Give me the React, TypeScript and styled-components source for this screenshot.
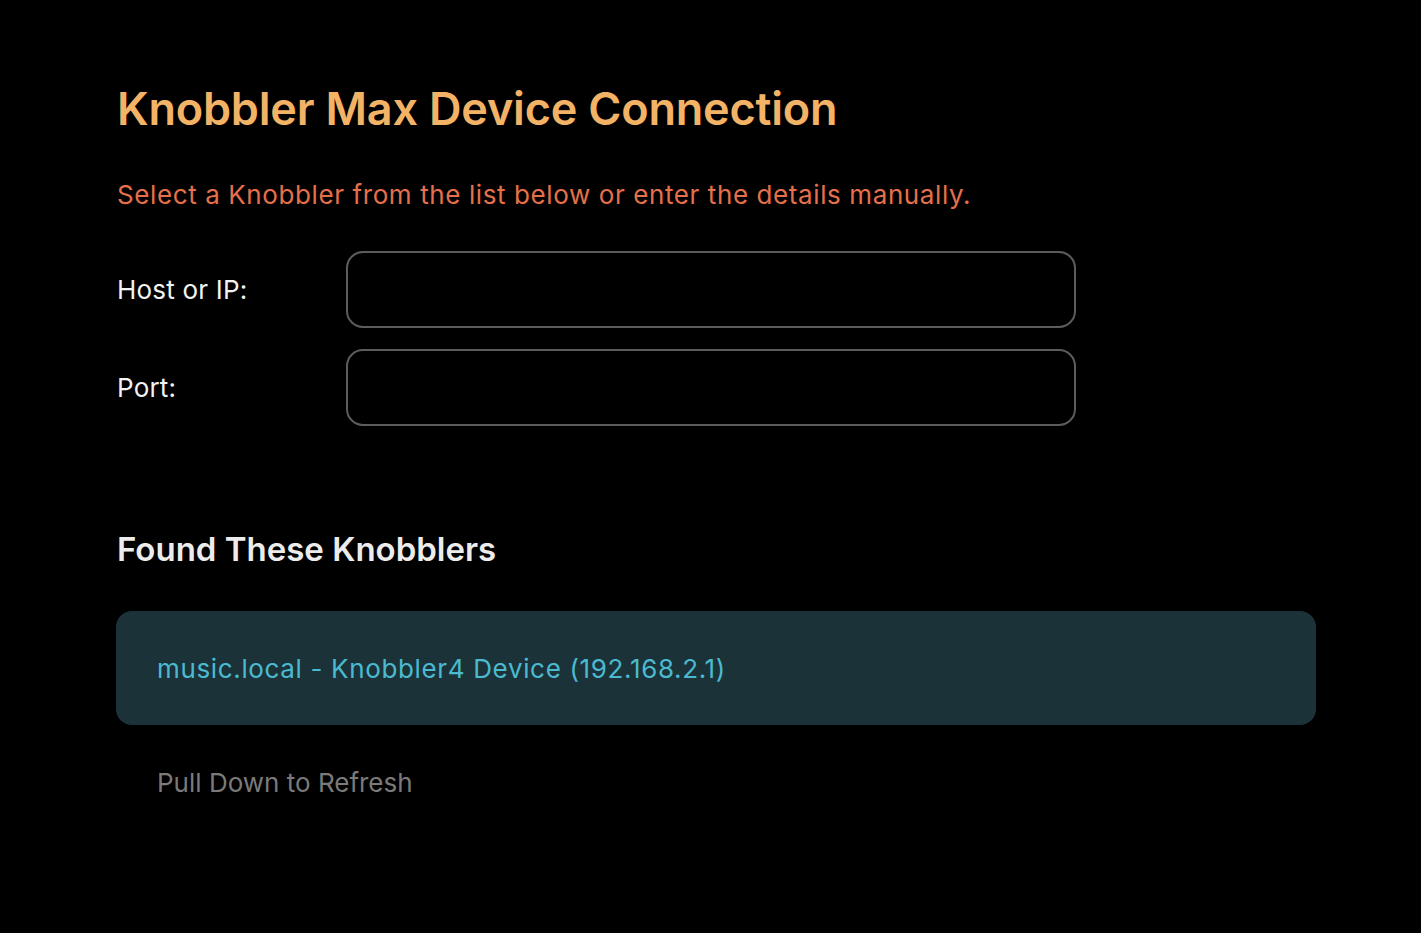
import React from "react";
import styled, { createGlobalStyle } from "styled-components";

const Global = createGlobalStyle`
  html, body { margin: 0; padding: 0; background: #000; }
  body { font-family: "Inter", "Noto Sans", sans-serif; -webkit-font-smoothing: antialiased; }
  * { box-sizing: border-box; }
`;

const Page = styled.main`
  min-height: 933px;
  background: #000;
  padding: 80px 105px 0 116px;
  display: flex;
  flex-direction: column;
`;

const Title = styled.h1`
  margin: 0;
  padding-left: 1px;
  font-size: 45px;
  font-weight: 600;
  line-height: 58px;
  color: #f3b366;
  letter-spacing: -0.2px;
`;

const Subtitle = styled.p`
  margin: 40px 0 0;
  padding-left: 1px;
  font-size: 26px;
  line-height: 34px;
  color: #e5704a;
  letter-spacing: 0.6px;
`;

const Form = styled.div`
  margin-top: 39px;
  display: flex;
  flex-direction: column;
  gap: 21px;
  width: 960px;
`;

const Row = styled.label`
  display: grid;
  grid-template-columns: 230px 1fr;
  align-items: center;
`;

const Label = styled.span`
  padding-left: 1px;
  font-size: 26px;
  color: #f2f2f2;
  letter-spacing: 0.2px;
`;

const Input = styled.input`
  height: 77px;
  border: 2px solid #5c5c5c;
  border-radius: 17px;
  background: #000;
  color: #fff;
  font: inherit;
  font-size: 26px;
  padding: 0 20px;
  outline: none;
`;

const SectionTitle = styled.h2`
  margin: 101px 0 0;
  padding-left: 1px;
  font-size: 33px;
  font-weight: 600;
  line-height: 44px;
  color: #ececec;
`;

const Card = styled.div`
  margin-top: 40px;
  height: 114px;
  border-radius: 16px;
  background: #1b3338;
  display: flex;
  align-items: center;
  padding: 0 41px;
  font-size: 26px;
  color: #4bbad0;
  letter-spacing: 0.65px;
`;

const Hint = styled.p`
  margin: 42px 0 0 41px;
  font-size: 26px;
  color: #7a7a7a;
`;

export default function App() {
  return (
    <>
      <Global />
      <Page>
        <Title>Knobbler Max Device Connection</Title>
        <Subtitle>Select a Knobbler from the list below or enter the details manually.</Subtitle>
        <Form>
          <Row>
            <Label>Host or IP:</Label>
            <Input type="text" />
          </Row>
          <Row>
            <Label>Port:</Label>
            <Input type="text" />
          </Row>
        </Form>
        <SectionTitle>Found These Knobblers</SectionTitle>
        <Card>music.local - Knobbler4 Device (192.168.2.1)</Card>
        <Hint>Pull Down to Refresh</Hint>
      </Page>
    </>
  );
}
